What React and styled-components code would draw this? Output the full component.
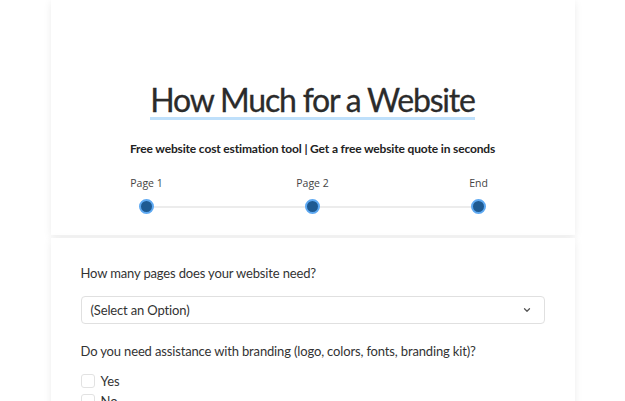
import React from 'react';
import styled, { createGlobalStyle } from 'styled-components';

const GlobalStyle = createGlobalStyle`
  html, body {
    margin: 0;
    padding: 0;
    background: #fff;
    font-family: Lato, 'Open Sans', sans-serif;
    color: #333;
  }
`;

const Page = styled.div`
  width: 625px;
  height: 401px;
  overflow: hidden;
  background: #fff;
`;

const Column = styled.div`
  width: 524px;
  margin: 0 auto;
  display: flex;
  flex-direction: column;
  gap: 3px;
`;

const Card = styled.section`
  background: #fff;
  box-shadow: 0 2px 8px rgba(0, 0, 0, 0.08);
  padding: ${(p) => p.$pad};
`;

const Title = styled.h1`
  margin: 0 auto;
  width: fit-content;
  font-size: 32px;
  font-weight: 400;
  line-height: 34px;
  color: #2b2b2b;
  border-bottom: 3px solid #bfe0fb;
  letter-spacing: -1.2px;
  -webkit-text-stroke: 0.3px #2b2b2b;
`;

const Subtitle = styled.p`
  margin: 21px 0 0;
  text-align: center;
  font-size: 12px;
  font-weight: 700;
  letter-spacing: -0.15px;
  color: #222;
`;

const Steps = styled.div`
  position: relative;
  display: flex;
  justify-content: space-between;
  margin: 20px 88px 0 88px;
  &::before {
    content: '';
    position: absolute;
    left: 8px;
    right: 8px;
    top: 30px;
    height: 2px;
    background: #ececec;
  }
`;

const Step = styled.div`
  position: relative;
  display: flex;
  flex-direction: column;
  align-items: center;
  width: 16px;
  font-size: 11px;
  color: #444;
`;

const StepLabel = styled.span`
  white-space: nowrap;
  line-height: 14px;
  font-family: 'Open Sans', Lato, sans-serif;
  font-size: 10.5px;
`;

const Dot = styled.span`
  margin-top: 9px;
  width: 11px;
  height: 11px;
  border-radius: 50%;
  background: #1e5a92;
  border: 2px solid #5ea9f2;
`;

const Question = styled.p`
  margin: ${(p) => p.$top} 0 0;
  font-size: 13px;
  letter-spacing: -0.15px;
  color: #333;
`;

const Select = styled.div`
  margin-top: 15px;
  height: 26px;
  border: 1px solid #e0e0e0;
  border-radius: 4px;
  display: flex;
  align-items: center;
  justify-content: space-between;
  padding: 0 12px 0 9px;
  font-size: 13px;
  letter-spacing: -0.15px;
  color: #333;
`;

const Options = styled.div`
  margin-top: 15px;
  display: flex;
  flex-direction: column;
  gap: 6px;
`;

const Option = styled.label`
  display: flex;
  align-items: center;
  gap: 6px;
  font-size: 13px;
  color: #333;
  line-height: 13px;
`;

const Box = styled.span`
  width: 12px;
  height: 12px;
  border: 1px solid #e2e2e2;
  border-radius: 3px;
`;

const Chevron = () => (
  <svg width="10" height="10" viewBox="0 0 24 24" fill="none" stroke="#555" strokeWidth="3" strokeLinecap="round" strokeLinejoin="round">
    <polyline points="6 9 12 15 18 9" />
  </svg>
);

const steps = ['Page 1', 'Page 2', 'End'];

export default function App() {
  return (
    <Page>
      <GlobalStyle />
      <Column>
        <Card $pad="83px 0 21px">
          <Title>How Much for a Website</Title>
          <Subtitle>
            Free website cost estimation tool | Get a free website quote in seconds
          </Subtitle>
          <Steps>
            {steps.map((s) => (
              <Step key={s}>
                <StepLabel>{s}</StepLabel>
                <Dot />
              </Step>
            ))}
          </Steps>
        </Card>
        <Card $pad="27px 30px 40px">
          <Question $top="0">How many pages does your website need?</Question>
          <Select>
            <span>(Select an Option)</span>
            <Chevron />
          </Select>
          <Question $top="19px">
            Do you need assistance with branding (logo, colors, fonts, branding kit)?
          </Question>
          <Options>
            <Option>
              <Box />
              Yes
            </Option>
            <Option>
              <Box />
              No
            </Option>
          </Options>
        </Card>
      </Column>
    </Page>
  );
}
